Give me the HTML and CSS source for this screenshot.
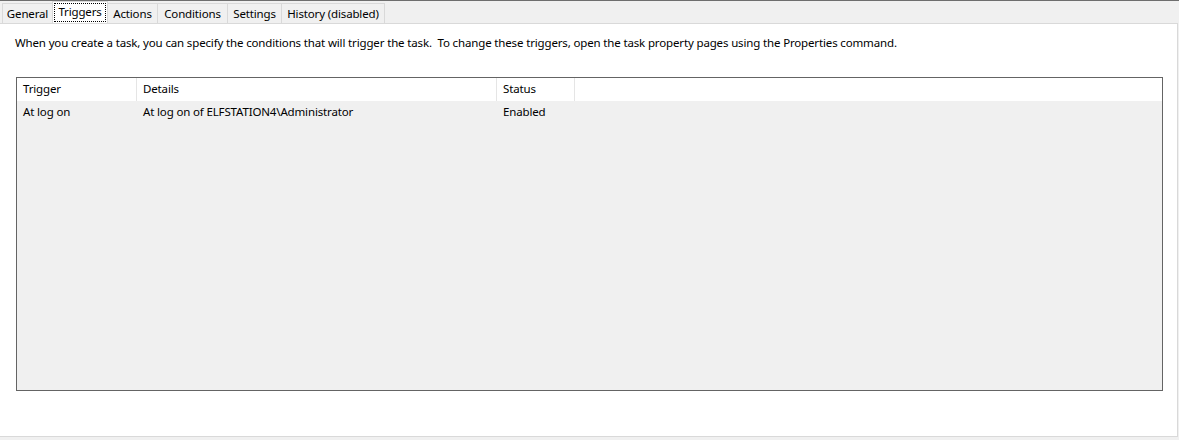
FILE: index.html
```html
<!DOCTYPE html>
<html>
<head>
<meta charset="utf-8">
<link rel="stylesheet" href="styles.css">
</head>
<body>
<div class="window">
  <div class="tabstrip">
    <div class="tab t-general">General</div>
    <div class="tab tab-active t-triggers"><span class="focus">Triggers</span></div>
    <div class="tab t-actions">Actions</div>
    <div class="tab t-conditions">Conditions</div>
    <div class="tab t-settings">Settings</div>
    <div class="tab t-history">History (disabled)</div>
  </div>
  <div class="panel">
    <p class="desc">When you create a task, you can specify the conditions that will trigger the task.&nbsp; To change these triggers, open the task property pages using the Properties command.</p>
    <div class="list">
      <div class="list-head">
        <div class="col c1">Trigger</div>
        <div class="col c2">Details</div>
        <div class="col c3">Status</div>
        <div class="col c4"></div>
      </div>
      <div class="list-row">
        <div class="cell c1">At log on</div>
        <div class="cell c2">At log on of ELFSTATION4\Administrator</div>
        <div class="cell c3">Enabled</div>
        <div class="cell c4"></div>
      </div>
    </div>
  </div>
</div>
</body>
</html>
```
FILE: styles.css
```css
* { box-sizing: border-box; }
html, body {
  margin: 0;
  padding: 0;
  background: #f0f0f0;
}
body {
  font-family: "Noto Sans", "Open Sans", sans-serif;
  font-size: 11.5px;
  letter-spacing: -0.15px;
  color: #000;
  width: 1179px;
  height: 440px;
  overflow: hidden;
}
.window {
  border-top: 1px solid #6e6e6e;
  height: 440px;
}
.tabstrip {
  display: flex;
  align-items: flex-end;
  height: 22px;
  padding-left: 2px;
}
.tab {
  height: 20px;
  border: 1px solid #d9d9d9;
  border-bottom: none;
  border-right: none;
  background: #f0f0f0;
  text-align: center;
  line-height: 19px;
  white-space: nowrap;
}
.t-general { width: 50px; }
.t-triggers { width: 56px; }
.t-actions { width: 50px; }
.t-conditions { width: 70px; }
.t-settings { width: 54px; }
.t-history { width: 104px; border-right: 1px solid #d9d9d9; }
.tab-active {
  height: 22px;
  background: #fff;
  border-right: 1px solid #d9d9d9;
  margin-right: -1px;
  position: relative;
  z-index: 1;
  padding: 1px 1px 0 1px;
}
.focus {
  display: block;
  outline: 1px dotted #000;
  outline-offset: -1px;
  height: 19px;
  line-height: 18px;
}
.panel {
  background: #fff;
  width: 1178px;
  height: 414px;
  border-top: 1px solid #d9d9d9;
  border-right: 1px solid #d9d9d9;
  border-bottom: 1px solid #d9d9d9;
  padding: 11px 0 0 15px;
}
.desc {
  margin: 0;
  line-height: 16px;
}
.list {
  margin-top: 26px;
  margin-left: 1px;
  width: 1147px;
  height: 314px;
  border: 1px solid #646464;
  background: #f0f0f0;
}
.list-head, .list-row {
  display: grid;
  grid-template-columns: 120px 360px 78px 1fr;
}
.list-head {
  background: #fff;
  height: 23px;
}
.col {
  border-right: 1px solid #e5e5e5;
  padding-left: 6px;
  line-height: 22px;
}
.col.c4 { border-right: none; }
.list-row { height: 22px; }
.cell {
  padding-left: 6px;
  line-height: 21px;
}
```
